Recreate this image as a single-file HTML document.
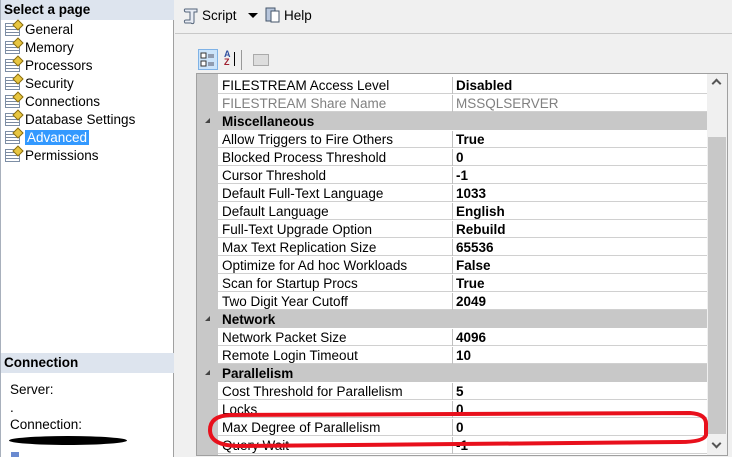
<!DOCTYPE html>
<html><head><style>
*{margin:0;padding:0;box-sizing:border-box}
body{width:732px;height:457px;overflow:hidden;background:#f0f0f0;font-family:"Liberation Sans",sans-serif;font-size:13.5px;color:#000;position:relative}
.left{position:absolute;left:0;top:0;width:174px;height:457px;background:#fff;border-left:1px solid #a8b0bc;border-right:1px solid #a0a0a0}
.hdr{position:absolute;left:0;width:173px;height:20px;background:#dde4ee;font-weight:bold;font-size:13.5px;padding:2px 3px}
.item{position:absolute;left:4px;height:18px;line-height:18px}
.item i{display:inline-block;width:15px;height:13px;vertical-align:-2px;margin-right:5px;border:1px solid #7d8ea5;background:repeating-linear-gradient(#fff 0 2px,#7b8aa0 2px 3px);position:relative}
.item i:after{content:"";position:absolute;right:-3px;top:-3px;width:6px;height:6px;background:#e8c640;border:1px solid #8a6d10;transform:rotate(45deg)}
.item span{padding:0 2px}
.sel{background:#3399ff;color:#fff}
.right{position:absolute;left:175px;top:0;right:0;height:457px;background:#f0f0f0}
.tb{position:absolute;left:0;top:0;right:0;height:34px;border-bottom:1px solid #c8c8c8}
.grid{position:absolute;left:196px;top:73px;width:532px;height:383px;border:1px solid #a0a0a0;background:#fff;overflow:hidden}
.gut{position:absolute;left:0;top:0;width:21px;height:100%;background:#c8c8c8}
.row{position:absolute;left:21px;width:489px;height:18px;border-bottom:1px solid #d0d0d0;background:#fff}
.row .n{position:absolute;left:4px;top:2px;white-space:nowrap}
.row .v{position:absolute;left:234px;top:1px;height:17px;width:255px;border-left:1px solid #c0c0c0;padding-left:3px;font-weight:bold;padding-top:1px}
.cat{position:absolute;left:0;width:510px;height:18px;background:#c8c8c8;font-weight:bold}
.cat b{position:absolute;left:25px;top:2px}
.cat s{position:absolute;left:8px;top:6px;width:0;height:0;border-left:5px solid transparent;border-bottom:5px solid #444;text-decoration:none}
.sb{position:absolute;left:510px;top:0;width:21px;height:100%;background:#f0f0f0}
.thumb{position:absolute;left:1px;right:2px;top:63px;height:297px;background:#c8c8c8}
.gray{color:#808080}
</style></head><body>
<div class="left">
<div class="hdr" style="top:0">Select a page</div>
<div class="item" style="top:21px"><i></i>General</div>
<div class="item" style="top:39px"><i></i>Memory</div>
<div class="item" style="top:57px"><i></i>Processors</div>
<div class="item" style="top:75px"><i></i>Security</div>
<div class="item" style="top:93px"><i></i>Connections</div>
<div class="item" style="top:111px"><i></i>Database Settings</div>
<div class="item" style="top:129px"><i></i><span class="sel">Advanced</span></div>
<div class="item" style="top:147px"><i></i>Permissions</div>
<div class="hdr" style="top:353px;height:20px">Connection</div>
<div class="item" style="top:381px;left:9px">Server:</div>
<div class="item" style="top:399px;left:9px">.</div>
<div class="item" style="top:416px;left:9px">Connection:</div>
<div style="position:absolute;left:8px;top:436px;width:118px;height:9px;background:#000;border-radius:50%"></div>
<div style="position:absolute;left:10px;top:452px;width:8px;height:5px;background:#6a8ad0"></div>
</div>
<div class="right">
<div class="tb">
<svg style="position:absolute;left:7px;top:7px" width="18" height="18"><path d="M3 2h12v3h-3v10c0 2-2 2-3 1H3c-1-1-1-3 1-3h4V5H4C2 5 2 2 3 2z" fill="#e8ecf4" stroke="#55657a"/></svg>
<div style="position:absolute;left:27px;top:8px">Script</div>
<div style="position:absolute;left:73px;top:13px;border-left:5px solid transparent;border-right:5px solid transparent;border-top:5px solid #000"></div>
<svg style="position:absolute;left:89px;top:6px" width="18" height="18"><rect x="2" y="2" width="9" height="13" fill="#b8c6dc" stroke="#44556a"/><rect x="7" y="5" width="8" height="11" fill="#fff" stroke="#44556a"/></svg>
<div style="position:absolute;left:109px;top:8px">Help</div>
</div>
<div style="position:absolute;left:23px;top:49px;width:20px;height:21px;background:#cce4fa;border:1px solid #7fb2e6"></div>
<svg style="position:absolute;left:25px;top:52px" width="16" height="16"><rect x="1" y="1" width="5" height="5" fill="#fff" stroke="#333"/><rect x="1" y="9" width="5" height="5" fill="#fff" stroke="#333"/><path d="M8 3h6M8 5h6M8 11h6M8 13h6" stroke="#556"/></svg>
<div style="position:absolute;left:49px;top:50px;font-size:9px;line-height:8px;font-weight:bold"><span style="color:#3050a0">A</span><br><span style="color:#a02030">Z</span></div>
<div style="position:absolute;left:59px;top:52px;width:1px;height:14px;background:#000"></div>
<div style="position:absolute;left:66px;top:50px;width:1px;height:20px;background:#999"></div>
<div style="position:absolute;left:78px;top:54px;width:16px;height:12px;border:1px solid #aaa;background:#ddd"></div>
</div>
<div class="grid">
<div class="gut"></div>
<div class="row" style="top:2px"><span class="n">FILESTREAM Access Level</span><span class="v">Disabled</span></div>
<div class="row" style="top:20px"><span class="n gray">FILESTREAM Share Name</span><span class="v gray" style="font-weight:normal">MSSQLSERVER</span></div>
<div class="cat" style="top:38px"><s></s><b>Miscellaneous</b></div>
<div class="row" style="top:56px"><span class="n">Allow Triggers to Fire Others</span><span class="v">True</span></div>
<div class="row" style="top:74px"><span class="n">Blocked Process Threshold</span><span class="v">0</span></div>
<div class="row" style="top:92px"><span class="n">Cursor Threshold</span><span class="v">-1</span></div>
<div class="row" style="top:110px"><span class="n">Default Full-Text Language</span><span class="v">1033</span></div>
<div class="row" style="top:128px"><span class="n">Default Language</span><span class="v">English</span></div>
<div class="row" style="top:146px"><span class="n">Full-Text Upgrade Option</span><span class="v">Rebuild</span></div>
<div class="row" style="top:164px"><span class="n">Max Text Replication Size</span><span class="v">65536</span></div>
<div class="row" style="top:182px"><span class="n">Optimize for Ad hoc Workloads</span><span class="v">False</span></div>
<div class="row" style="top:200px"><span class="n">Scan for Startup Procs</span><span class="v">True</span></div>
<div class="row" style="top:218px"><span class="n">Two Digit Year Cutoff</span><span class="v">2049</span></div>
<div class="cat" style="top:236px"><s></s><b>Network</b></div>
<div class="row" style="top:254px"><span class="n">Network Packet Size</span><span class="v">4096</span></div>
<div class="row" style="top:272px"><span class="n">Remote Login Timeout</span><span class="v">10</span></div>
<div class="cat" style="top:290px"><s></s><b>Parallelism</b></div>
<div class="row" style="top:308px"><span class="n">Cost Threshold for Parallelism</span><span class="v">5</span></div>
<div class="row" style="top:326px"><span class="n">Locks</span><span class="v">0</span></div>
<div class="row" style="top:344px"><span class="n">Max Degree of Parallelism</span><span class="v">0</span></div>
<div class="row" style="top:362px"><span class="n">Query Wait</span><span class="v">-1</span></div>
<div class="sb"><div style="position:absolute;left:6px;top:6px;width:7px;height:7px;border-left:2px solid #555;border-top:2px solid #555;transform:rotate(45deg)"></div><div class="thumb"></div><div style="position:absolute;left:6px;top:366px;width:7px;height:7px;border-right:2px solid #555;border-bottom:2px solid #555;transform:rotate(45deg)"></div></div>
</div>
<svg style="position:absolute;left:0;top:0" width="732" height="457"><path d="M230 415 L690 413 Q707 414 706 425 L706 435 Q704 442 680 442 L240 446 Q210 446 210 430 Q210 416 230 415 Z" fill="none" stroke="#e8101c" stroke-width="4"/></svg>
</body></html>
